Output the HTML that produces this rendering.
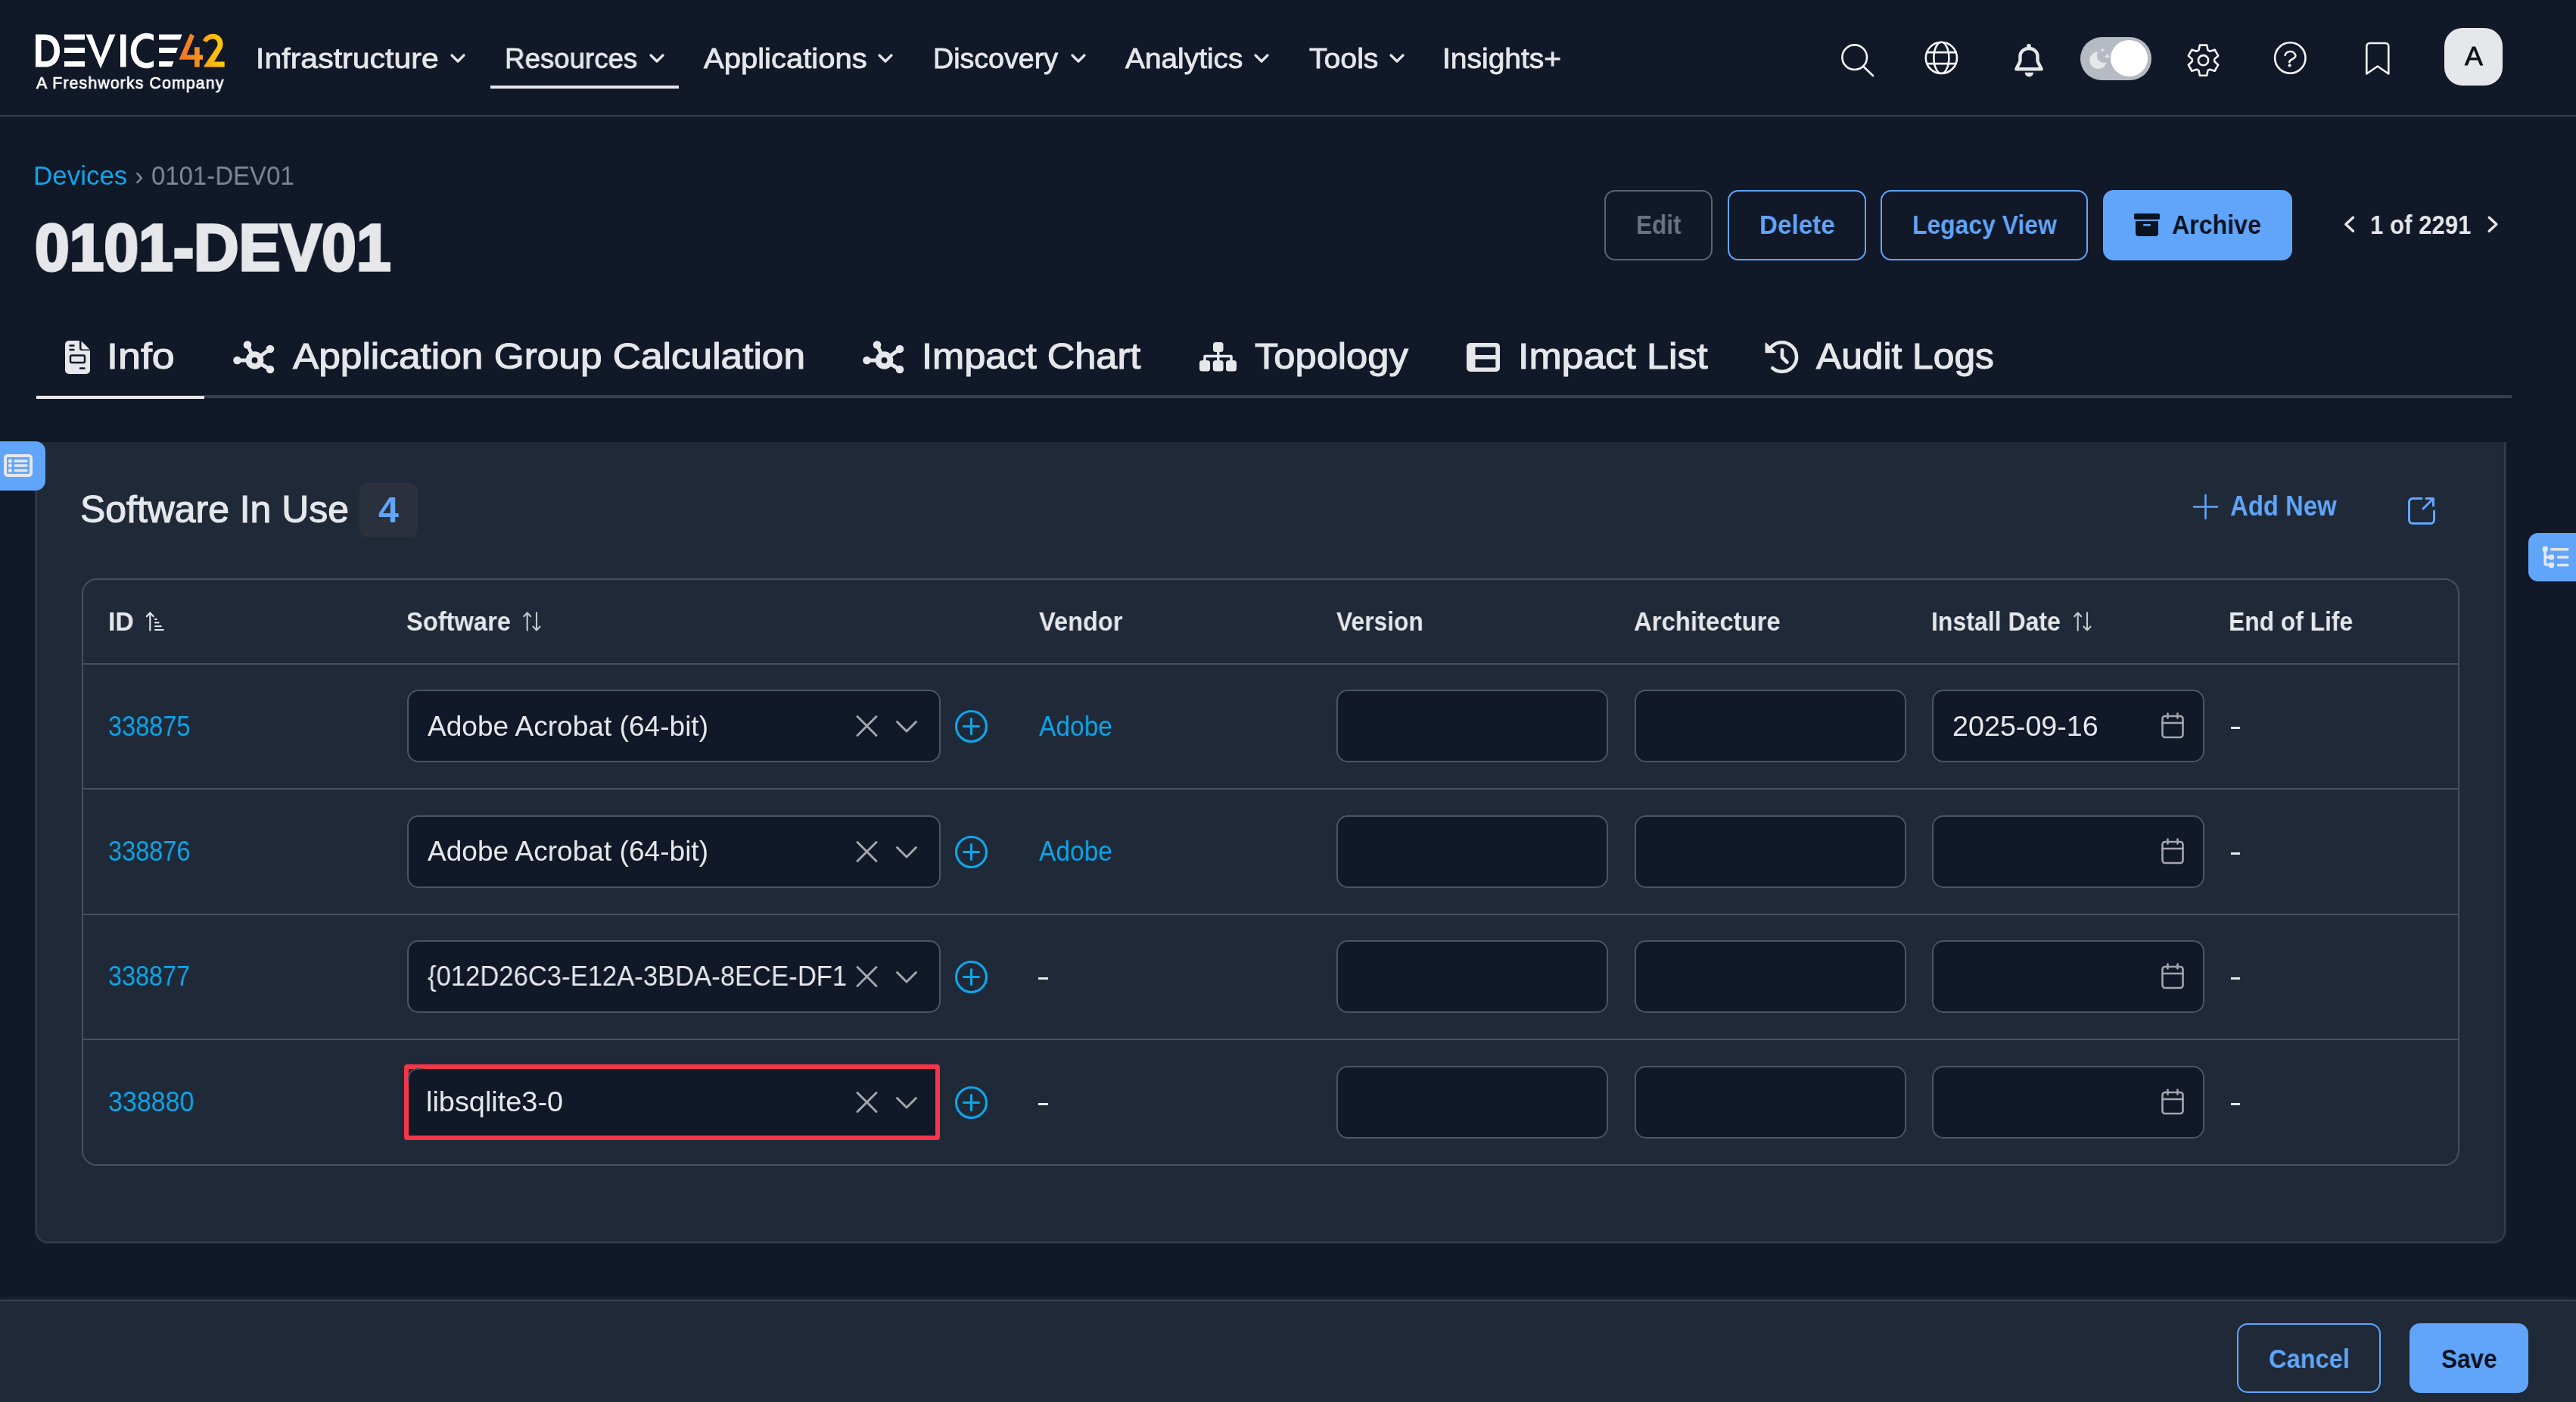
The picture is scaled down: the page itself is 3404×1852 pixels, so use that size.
<!DOCTYPE html>
<html><head><meta charset="utf-8">
<style>
*{box-sizing:border-box;margin:0;padding:0}
html,body{width:3404px;height:1852px;overflow:hidden;background:#111827;font-family:"Liberation Sans",sans-serif;color:#e5e7eb}
.a{position:absolute}
.t{position:absolute;white-space:nowrap;transform-origin:0 0;will-change:transform}
svg{overflow:visible}
.btn{position:absolute;top:251px;height:93px;border-radius:14px;border:2.6px solid #60a5fa}
.sel{left:537.5px;width:705px;height:96px;border:2px solid #4b5563;border-radius:15px;background:#111827}
.inp{height:96px;border:2px solid #4b5563;border-radius:15px;background:#111827}
</style></head>
<body>
<div class="a" style="left:0;top:152px;width:3404px;height:2px;background:#363c49"></div>
<svg class="a" style="left:46px;top:44px" width="252" height="80" viewBox="0 0 252 80">
<defs><linearGradient id="g42" gradientUnits="userSpaceOnUse" x1="190" y1="0" x2="251" y2="0"><stop offset="0" stop-color="#ee7328"/><stop offset="0.5" stop-color="#f7951d"/><stop offset="0.58" stop-color="#f5a81a"/><stop offset="1" stop-color="#ffd000"/></linearGradient></defs>
<path d="M1 1.5h13c12 0 19 9 19 21.5s-7 21.5-19 21.5h-13z M8.5 9v28h5.5c7 0 11.5-5.5 11.5-14s-4.5-14-11.5-14z" fill="#fff" fill-rule="evenodd"/>
<rect x="39" y="1.5" width="27" height="7" fill="#fff"/><rect x="39" y="19" width="27" height="7" fill="#fff"/><rect x="39" y="37" width="27" height="7" fill="#fff"/>
<path d="M67.5 1.5h8l11.5 31l11.5-31h8l-19.5 45z" fill="#fff"/>
<rect x="113" y="1.5" width="7.5" height="43" fill="#fff"/>
<path transform="translate(157.5 0) scale(0.93 1) translate(-157.5 0)" d="M157 10c-3-2-6.5-3-10-3c-8.5 0-14.5 7-14.5 16s6 16 14.5 16c3.5 0 7-1 10-3v8c-3 1.5-6.5 2.3-10 2.3c-13 0-22.5-10-22.5-23.3s9.5-23.3 22.5-23.3c3.5 0 7 .8 10 2.3z" fill="#fff"/>
<path d="M164 1.5h30.5l-2.5 7h-28z M164 19h25l-2.5 7h-22.5z M164 37h19.5l-2.5 7h-17z" fill="#fff"/>
<path d="M205.4 0.3L210.9 3.5L200.5 28.6H211.1V18.2H217.7V28.6H222V34.8H217.7V44.6H211.1V34.8H190.5Z" fill="url(#g42)"/>
<path d="M221.9 9.5C224.5 3.8 229.5 0.7 235.5 0.7C243 0.7 248.5 6.5 248.5 13.8C248.5 16 248.1 18 247.6 19.5L237 37.6H250.7V44.6H223.6V43.1L240.5 18C241.2 16.8 241.5 15.5 241.5 14.2C241.5 10 238.7 7.4 235.2 7.4C231.6 7.4 228.8 9.3 227.4 12.1Z" fill="url(#g42)"/>
</svg>
<div class="t" style="left:48.00px;top:99px;font-size:21.92px;line-height:21.92px;font-weight:normal;color:#fff;-webkit-text-stroke:0.7px #fff;transform:scaleX(0.9688);letter-spacing:1.2px;">A Freshworks Company</div>
<div class="t" style="left:338.32px;top:59px;font-size:37.58px;line-height:37.58px;font-weight:normal;color:#e5e7eb;-webkit-text-stroke:0.8px #e5e7eb;transform:scaleX(1.0922);">Infrastructure</div>
<svg class="a" style="left:595px;top:70px" width="20" height="14" viewBox="0 0 20 14"><path d="M2 3l8 8l8-8" fill="none" stroke="#e5e7eb" stroke-width="3.2" stroke-linecap="round" stroke-linejoin="round"/></svg>
<div class="t" style="left:667.35px;top:59px;font-size:37.58px;line-height:37.58px;font-weight:normal;color:#e5e7eb;-webkit-text-stroke:0.8px #e5e7eb;transform:scaleX(0.9757);">Resources</div>
<svg class="a" style="left:858px;top:70px" width="20" height="14" viewBox="0 0 20 14"><path d="M2 3l8 8l8-8" fill="none" stroke="#e5e7eb" stroke-width="3.2" stroke-linecap="round" stroke-linejoin="round"/></svg>
<div class="t" style="left:930.00px;top:59px;font-size:37.58px;line-height:37.58px;font-weight:normal;color:#e5e7eb;-webkit-text-stroke:0.8px #e5e7eb;transform:scaleX(1.0644);">Applications</div>
<svg class="a" style="left:1160px;top:70px" width="20" height="14" viewBox="0 0 20 14"><path d="M2 3l8 8l8-8" fill="none" stroke="#e5e7eb" stroke-width="3.2" stroke-linecap="round" stroke-linejoin="round"/></svg>
<div class="t" style="left:1232.80px;top:59px;font-size:37.58px;line-height:37.58px;font-weight:normal;color:#e5e7eb;-webkit-text-stroke:0.8px #e5e7eb;">Discovery</div>
<svg class="a" style="left:1415px;top:70px" width="20" height="14" viewBox="0 0 20 14"><path d="M2 3l8 8l8-8" fill="none" stroke="#e5e7eb" stroke-width="3.2" stroke-linecap="round" stroke-linejoin="round"/></svg>
<div class="t" style="left:1486.80px;top:59px;font-size:37.58px;line-height:37.58px;font-weight:normal;color:#e5e7eb;-webkit-text-stroke:0.8px #e5e7eb;transform:scaleX(1.0333);">Analytics</div>
<svg class="a" style="left:1657px;top:70px" width="20" height="14" viewBox="0 0 20 14"><path d="M2 3l8 8l8-8" fill="none" stroke="#e5e7eb" stroke-width="3.2" stroke-linecap="round" stroke-linejoin="round"/></svg>
<div class="t" style="left:1730.00px;top:59px;font-size:37.58px;line-height:37.58px;font-weight:normal;color:#e5e7eb;-webkit-text-stroke:0.8px #e5e7eb;transform:scaleX(1.0425);">Tools</div>
<svg class="a" style="left:1836px;top:70px" width="20" height="14" viewBox="0 0 20 14"><path d="M2 3l8 8l8-8" fill="none" stroke="#e5e7eb" stroke-width="3.2" stroke-linecap="round" stroke-linejoin="round"/></svg>
<div class="t" style="left:1906.39px;top:59px;font-size:37.58px;line-height:37.58px;font-weight:normal;color:#e5e7eb;-webkit-text-stroke:0.8px #e5e7eb;transform:scaleX(1.0374);">Insights+</div>
<div class="a" style="left:648px;top:113px;width:249px;height:4px;background:#e5e7eb"></div>
<svg class="a" style="left:2400px;top:40px" width="800" height="80" viewBox="2400 40 800 80"><g fill="none" stroke="#f3f4f6" stroke-width="2.6" stroke-linecap="round" stroke-linejoin="round"><circle cx="2450.7" cy="75.7" r="16.3"/><path d="M2462.5 88L2475 100"/><circle cx="2565.4" cy="76.4" r="20.6"/><ellipse cx="2565.4" cy="76.4" rx="10" ry="20.6"/><path d="M2546.1 69.1H2584.7M2546.3 84.1H2584.5"/><path d="M2905.48 66.18 L2906.87 59.63 L2916.13 59.63 L2917.52 66.18 L2920.20 67.73 L2926.57 65.65 L2931.20 73.68 L2926.22 78.15 L2926.22 81.25 L2931.20 85.72 L2926.57 93.75 L2920.20 91.67 L2917.52 93.22 L2916.13 99.77 L2906.87 99.77 L2905.48 93.22 L2902.80 91.67 L2896.43 93.75 L2891.80 85.72 L2896.78 81.25 L2896.78 78.15 L2891.80 73.68 L2896.43 65.65 L2902.80 67.73Z"/><circle cx="2911.5" cy="79.7" r="6.6"/><circle cx="3026.3" cy="76.5" r="20.2"/><path d="M3019.6 73A7 6.2 0 0 1 3033.4 73.5C3033.4 76 3031.5 77 3028.5 78.5C3026 79.7 3025.3 80.5 3025.3 82.2"/><path d="M3127.3 97.5V61A4 4 0 0 1 3131.3 57H3152.3A4 4 0 0 1 3156.3 61V97.5L3141.8 87.5Z"/></g><circle cx="3025.6" cy="86.5" r="2.1" fill="#f3f4f6"/></svg>
<svg class="a" style="left:2655px;top:52px" width="52" height="52" viewBox="0 0 52 52"><path d="M9.3 39.3H42.7L38 30C37.6 29 37.5 28 37.5 27V22A11.5 10 0 0 0 14.5 22V27C14.5 28 14.4 29 14 30Z" fill="none" stroke="#e5e7eb" stroke-width="4.4" stroke-linejoin="round"/><rect x="23.1" y="5.9" width="5.7" height="6" rx="2.5" fill="#e5e7eb"/><path d="M20.7 43.8H32.1A5.7 5.7 0 0 1 20.7 43.8Z" fill="#e5e7eb"/></svg>
<div class="a" style="left:2749px;top:49px;width:94px;height:57px;border-radius:29px;background:#b6bac2"></div>
<div class="a" style="left:2789px;top:53px;width:49px;height:48px;border-radius:50%;background:#ffffff"></div>
<svg class="a" style="left:2755px;top:60px" width="36" height="36" viewBox="0 0 36 36"><mask id="mm"><rect x="0" y="0" width="36" height="36" fill="white"/><circle cx="25" cy="13.8" r="9.2" fill="black"/></mask><circle cx="17.5" cy="19.8" r="11.3" fill="#e5e7eb" mask="url(#mm)"/><path d="M23.4 2.4999999999999996Q23.4 6.1 27.0 6.1Q23.4 6.1 23.4 9.7Q23.4 6.1 19.799999999999997 6.1Q23.4 6.1 23.4 2.4999999999999996Z M29.5 9.2Q29.5 14.2 34.5 14.2Q29.5 14.2 29.5 19.2Q29.5 14.2 24.5 14.2Q29.5 14.2 29.5 9.2Z" fill="#e5e7eb"/></svg>
<div class="a" style="left:3230px;top:37px;width:77px;height:76px;border-radius:24px;background:#e5e7eb"></div>
<div class="t" style="left:3256.50px;top:57px;font-size:35.85px;line-height:35.85px;font-weight:normal;color:#111;-webkit-text-stroke:0.8px #111;">A</div>
<div class="t" style="left:44.37px;top:215px;font-size:34.66px;line-height:34.66px;font-weight:normal;color:#0ea5e9;transform:scaleX(1.0084);">Devices</div>
<div class="t" style="left:178.00px;top:215px;font-size:34.66px;line-height:34.66px;font-weight:normal;color:#7c8a96;">›</div>
<div class="t" style="left:199.85px;top:215px;font-size:34.66px;line-height:34.66px;font-weight:normal;color:#7c8a96;transform:scaleX(0.9505);">0101-DEV01</div>
<div class="t" style="left:46.42px;top:284px;font-size:87.43px;line-height:87.43px;font-weight:bold;color:#e5e7eb;-webkit-text-stroke:3.5px #e5e7eb;transform:scaleX(0.9400);">0101-DEV01</div>
<div class="btn" style="left:2120px;width:143px;border-color:#5b6270"></div>
<div class="btn" style="left:2283px;width:183px"></div>
<div class="btn" style="left:2485px;width:274px"></div>
<div class="btn" style="left:2779px;width:250px;background:#60a5fa;border-color:#60a5fa"></div>
<div class="t" style="left:2161.87px;top:280px;font-size:34.39px;line-height:34.39px;font-weight:bold;color:#6b7280;transform:scaleX(0.9159);">Edit</div>
<div class="t" style="left:2324.57px;top:280px;font-size:34.39px;line-height:34.39px;font-weight:bold;color:#60a5fa;transform:scaleX(0.9670);">Delete</div>
<div class="t" style="left:2526.54px;top:280px;font-size:34.39px;line-height:34.39px;font-weight:bold;color:#60a5fa;transform:scaleX(0.9279);">Legacy View</div>
<div class="t" style="left:2870.06px;top:280px;font-size:34.39px;line-height:34.39px;font-weight:bold;color:#0b1220;transform:scaleX(0.9355);">Archive</div>
<svg class="a" style="left:2820px;top:282px" width="34" height="30" viewBox="0 0 34 30"><rect x="0" y="0" width="34" height="8" rx="2" fill="#0b1220"/><path d="M2 10h30v16a4 4 0 0 1-4 4h-22a4 4 0 0 1-4-4z" fill="#0b1220"/><rect x="12" y="14" width="10" height="2.5" rx="1.2" fill="#60a5fa"/></svg>
<svg class="a" style="left:3090px;top:280px" width="220" height="32" viewBox="3090 280 220 32"><g fill="none" stroke="#e5e7eb" stroke-width="3.4" stroke-linecap="round" stroke-linejoin="round"><path d="M3109.5 287.3L3099.8 296.3L3109.5 305.3M3289.2 287.3L3298.9 296.3L3289.2 305.3"/></g></svg>
<div class="t" style="left:3132.19px;top:280px;font-size:34.39px;line-height:34.39px;font-weight:bold;color:#e5e7eb;transform:scaleX(0.9069);">1 of 2291</div>
<div class="a" style="left:48px;top:522px;width:3271px;height:4px;background:#373e4b"></div>
<div class="a" style="left:48px;top:523px;width:222px;height:4px;background:#e5e7eb"></div>
<div class="t" style="left:141.27px;top:447px;font-size:47.56px;line-height:47.56px;font-weight:normal;color:#e5e7eb;-webkit-text-stroke:1.1px #e5e7eb;transform:scaleX(1.1324);">Info</div>
<div class="t" style="left:386.60px;top:447px;font-size:47.56px;line-height:47.56px;font-weight:normal;color:#e5e7eb;-webkit-text-stroke:1.1px #e5e7eb;transform:scaleX(1.0808);">Application Group Calculation</div>
<div class="t" style="left:1217.75px;top:447px;font-size:47.56px;line-height:47.56px;font-weight:normal;color:#e5e7eb;-webkit-text-stroke:1.1px #e5e7eb;transform:scaleX(1.0632);">Impact Chart</div>
<div class="t" style="left:1658.00px;top:447px;font-size:47.56px;line-height:47.56px;font-weight:normal;color:#e5e7eb;-webkit-text-stroke:1.1px #e5e7eb;transform:scaleX(1.0654);">Topology</div>
<div class="t" style="left:2005.64px;top:447px;font-size:47.56px;line-height:47.56px;font-weight:normal;color:#e5e7eb;-webkit-text-stroke:1.1px #e5e7eb;transform:scaleX(1.0907);">Impact List</div>
<div class="t" style="left:2399.80px;top:447px;font-size:47.56px;line-height:47.56px;font-weight:normal;color:#e5e7eb;-webkit-text-stroke:1.1px #e5e7eb;transform:scaleX(1.0455);">Audit Logs</div>
<svg class="a" style="left:86px;top:450px" width="33" height="44" viewBox="0 0 33 44"><path d="M0 5a5 5 0 0 1 5-5h14v10a3 3 0 0 0 3 3h11v26a5 5 0 0 1-5 5h-23a5 5 0 0 1-5-5z" fill="#e5e7eb"/><path d="M21.5 0.5l11 11h-9a2 2 0 0 1-2-2z" fill="#e5e7eb"/><g stroke="#111827" stroke-width="2.4" stroke-linecap="round" fill="none"><path d="M6.5 6.5h5M6.5 12h5M20 36.5h5.5"/><rect x="7" y="19.5" width="19" height="9.5" rx="2"/></g></svg>
<svg class="a" style="left:308px;top:450px" width="55" height="44" viewBox="0 0 55 44"><g fill="#e5e7eb"><circle cx="28.5" cy="26" r="11.8"/><circle cx="5.5" cy="26" r="5.3"/><circle cx="19" cy="5.5" r="5.3"/><circle cx="49" cy="11" r="5.3"/><circle cx="49" cy="38" r="5.3"/></g><g stroke="#e5e7eb" stroke-width="5"><path d="M5.5 26h20M19 5.5l9.5 20.5M49 11l-20.5 15M49 38l-20.5-12"/></g><circle cx="28.5" cy="26" r="3.9" fill="#111827"/></svg>
<svg class="a" style="left:1140px;top:450px" width="55" height="44" viewBox="0 0 55 44"><g fill="#e5e7eb"><circle cx="28.5" cy="26" r="11.8"/><circle cx="5.5" cy="26" r="5.3"/><circle cx="19" cy="5.5" r="5.3"/><circle cx="49" cy="11" r="5.3"/><circle cx="49" cy="38" r="5.3"/></g><g stroke="#e5e7eb" stroke-width="5"><path d="M5.5 26h20M19 5.5l9.5 20.5M49 11l-20.5 15M49 38l-20.5-12"/></g><circle cx="28.5" cy="26" r="3.9" fill="#111827"/></svg>
<svg class="a" style="left:1585px;top:452px" width="49" height="39" viewBox="0 0 49 39"><g fill="#e5e7eb"><rect x="18" y="0" width="13.5" height="13" rx="3.5"/><rect x="0" y="24" width="14" height="14.5" rx="3.5"/><rect x="17.8" y="24" width="13.8" height="14.5" rx="3.5"/><rect x="35" y="24" width="14" height="14.5" rx="3.5"/></g><g fill="none" stroke="#e5e7eb" stroke-width="3.5" stroke-linejoin="round"><path d="M24.8 12v14M7 26v-7.5h35v7.5"/></g></svg>
<svg class="a" style="left:1938px;top:453px" width="44" height="38" viewBox="0 0 44 38"><path fill-rule="evenodd" fill="#e5e7eb" d="M5 0h34a5 5 0 0 1 5 5v28a5 5 0 0 1-5 5h-34a5 5 0 0 1-5-5v-28a5 5 0 0 1 5-5z M11.5 5.5v10.5h26.8v-10.5z M11.5 21.5v11h26.8v-11z"/></svg>
<svg class="a" style="left:2333px;top:449px" width="44" height="45" viewBox="0 0 44 45"><g fill="none" stroke="#e5e7eb" stroke-width="4.6" stroke-linecap="round" stroke-linejoin="round"><path d="M9.2 37.2A19.3 19.3 0 1 0 7.5 9.5"/><path d="M22 13v10l6.5 6.5"/></g><path d="M0.3 4.2v12.4h12.6z" fill="#e5e7eb" stroke="#e5e7eb" stroke-width="1.5" stroke-linejoin="round"/></svg>
<div class="a" style="left:47px;top:584px;width:3264px;height:1058px;background:#1f2937;border:2px solid #373e4b;border-top:none;border-radius:0 0 16px 16px;box-shadow:0 0 4px rgba(160,170,190,0.18)"></div>
<div class="a" style="left:40px;top:576px;width:3280px;height:8px;background:#111827"></div>
<div class="a" style="left:0;top:583px;width:60px;height:65px;background:#60a5fa;border-radius:0 13px 13px 0"></div>
<svg class="a" style="left:5px;top:600px" width="38" height="30" viewBox="0 0 38 30"><rect x="2" y="2" width="34" height="26" rx="3" fill="none" stroke="#e5e7eb" stroke-width="4"/><g fill="#e5e7eb"><circle cx="8.4" cy="9" r="2.5"/><circle cx="8.4" cy="15" r="2.5"/><circle cx="8.4" cy="21.5" r="2.5"/></g><g stroke="#e5e7eb" stroke-width="3.5" stroke-linecap="round"><path d="M15 9h15M15 15h15M15 21.5h15"/></g></svg>
<div class="a" style="left:3341px;top:704px;width:63px;height:64px;background:#60a5fa;border-radius:13px 0 0 13px"></div>
<svg class="a" style="left:3359px;top:721px" width="36" height="30" viewBox="0 0 36 30"><g fill="#e5e7eb"><rect x="0.7" y="0.8" width="7" height="7" rx="2"/><rect x="9" y="11.5" width="7" height="7" rx="2"/><rect x="9" y="22" width="7" height="7" rx="2"/></g><g fill="none" stroke="#e5e7eb" stroke-width="3.5" stroke-linecap="round"><path d="M4.2 6v17a2 2 0 0 0 2 2h4M4.2 15h5M12.5 4.8h21.5M21.5 15h12.5M21.5 25.5h12.5"/></g></svg>
<div class="t" style="left:106.27px;top:649px;font-size:49.09px;line-height:49.09px;font-weight:normal;color:#e5e7eb;-webkit-text-stroke:1.1px #e5e7eb;transform:scaleX(1.0165);">Software In Use</div>
<div class="a" style="left:475px;top:638px;width:77px;height:72px;background:#2a303c;border-radius:10px"></div>
<div class="t" style="left:499.79px;top:650px;font-size:48.01px;line-height:48.01px;font-weight:bold;color:#60a5fa;transform:scaleX(1.0077);">4</div>
<svg class="a" style="left:2898px;top:653px" width="33" height="33" viewBox="0 0 33 33"><path d="M16.5 1v31M1 16.5h31" stroke="#60a5fa" stroke-width="2.6" stroke-linecap="round"/></svg>
<div class="t" style="left:2947.31px;top:651px;font-size:36.95px;line-height:36.95px;font-weight:bold;color:#60a5fa;transform:scaleX(0.8904);">Add New</div>
<svg class="a" style="left:3182px;top:657px" width="35" height="35" viewBox="0 0 35 35"><g fill="none" stroke="#60a5fa" stroke-width="3" stroke-linecap="round" stroke-linejoin="round"><path d="M18 1.5h-12a4.5 4.5 0 0 0-4.5 4.5v24a4.5 4.5 0 0 0 4.5 4.5h24a4.5 4.5 0 0 0 4.5-4.5v-12"/><path d="M20 15l13.5-13.5M24 1.5h9.5v9.5"/></g></svg>
<div class="a" style="left:108px;top:764px;width:3142px;height:776px;border:2px solid #474f5c;border-radius:20px"></div>
<div class="a" style="left:110px;top:876px;width:3138px;height:2px;background:#474f5c"></div>
<div class="a" style="left:110px;top:1041px;width:3138px;height:2px;background:#474f5c"></div>
<div class="a" style="left:110px;top:1207px;width:3138px;height:2px;background:#474f5c"></div>
<div class="a" style="left:110px;top:1372px;width:3138px;height:2px;background:#474f5c"></div>
<div class="t" style="left:143.33px;top:804px;font-size:34.39px;line-height:34.39px;font-weight:bold;color:#e5e7eb;transform:scaleX(0.9839);">ID</div>
<div class="t" style="left:536.55px;top:804px;font-size:34.39px;line-height:34.39px;font-weight:bold;color:#e5e7eb;transform:scaleX(0.9503);">Software</div>
<div class="t" style="left:1373.00px;top:804px;font-size:34.39px;line-height:34.39px;font-weight:bold;color:#e5e7eb;transform:scaleX(0.9466);">Vendor</div>
<div class="t" style="left:1766.30px;top:804px;font-size:34.39px;line-height:34.39px;font-weight:bold;color:#e5e7eb;transform:scaleX(0.9238);">Version</div>
<div class="t" style="left:2158.64px;top:804px;font-size:34.39px;line-height:34.39px;font-weight:bold;color:#e5e7eb;transform:scaleX(0.9570);">Architecture</div>
<div class="t" style="left:2552.14px;top:804px;font-size:34.39px;line-height:34.39px;font-weight:bold;color:#e5e7eb;transform:scaleX(0.9317);">Install Date</div>
<div class="t" style="left:2945.15px;top:804px;font-size:34.39px;line-height:34.39px;font-weight:bold;color:#e5e7eb;transform:scaleX(0.9240);">End of Life</div>
<svg class="a" style="left:190px;top:807px" width="30" height="28" viewBox="0 0 30 28"><g fill="none" stroke="#e5e7eb" stroke-width="2.1" stroke-linecap="round" stroke-linejoin="round"><path d="M8.3 2.6v23.2M3.8 7.3l4.5-4.7l4.5 4.7"/><path d="M15 11h1.8M15 15.5h4.6M15 20.2h7.8M15 25h10.8"/></g></svg>
<svg class="a" style="left:691px;top:807px" width="26" height="28" viewBox="0 0 26 28"><g fill="none" stroke="#c5c8ce" stroke-width="2.1" stroke-linecap="round" stroke-linejoin="round"><path d="M5.7 2.6v23.2M1.2 7.3l4.5-4.7l4.5 4.7"/><path d="M18 2.2v23.2M13.5 20.7l4.5 4.7l4.5-4.7"/></g></svg>
<svg class="a" style="left:2740px;top:807px" width="26" height="28" viewBox="0 0 26 28"><g fill="none" stroke="#c5c8ce" stroke-width="2.1" stroke-linecap="round" stroke-linejoin="round"><path d="M5.7 2.6v23.2M1.2 7.3l4.5-4.7l4.5 4.7"/><path d="M18 2.2v23.2M13.5 20.7l4.5 4.7l4.5-4.7"/></g></svg>
<div class="t" style="left:142.61px;top:942px;font-size:36.35px;line-height:36.35px;font-weight:normal;color:#0ea5e9;transform:scaleX(0.8950);">338875</div>
<div class="a sel" style="top:911.0px"></div>
<div class="t" style="left:564.70px;top:942px;font-size:36.35px;line-height:36.35px;font-weight:normal;color:#e5e7eb;transform:scaleX(1.0207);">Adobe Acrobat (64-bit)</div>
<svg class="a" style="left:1131px;top:945.0px" width="29" height="28" viewBox="0 0 29 28"><path d="M2 1.5l25 25M27 1.5l-25 25" stroke="#a3a6ad" stroke-width="3" stroke-linecap="round"/></svg>
<svg class="a" style="left:1183px;top:951.0px" width="31" height="18" viewBox="0 0 31 18"><path d="M2.5 2.5l12.5 12.5l12.5-12.5" fill="none" stroke="#a3a6ad" stroke-width="3" stroke-linecap="round" stroke-linejoin="round"/></svg>
<svg class="a" style="left:1261px;top:937.0px" width="45" height="45" viewBox="0 0 45 45"><g fill="none" stroke="#0ea5e9" stroke-width="3.2" stroke-linecap="round"><circle cx="22.5" cy="22.5" r="20"/><path d="M22.5 12.5v20M12.5 22.5h20"/></g></svg>
<div class="t" style="left:1373.00px;top:942px;font-size:36.35px;line-height:36.35px;font-weight:normal;color:#0ea5e9;transform:scaleX(0.9221);">Adobe</div>
<div class="a inp" style="left:1766px;top:911.0px;width:359px"></div>
<div class="a inp" style="left:2160px;top:911.0px;width:359px"></div>
<div class="a inp" style="left:2553px;top:911.0px;width:360px"></div>
<div class="t" style="left:2579.53px;top:942px;font-size:36.35px;line-height:36.35px;font-weight:normal;color:#e5e7eb;transform:scaleX(1.0374);">2025-09-16</div>
<svg class="a" style="left:2856px;top:941.0px" width="30" height="35" viewBox="0 0 30 35"><g fill="none" stroke="#a3a6ad" stroke-width="2.6" stroke-linecap="round" stroke-linejoin="round"><rect x="1.5" y="5" width="27" height="28" rx="3.5"/><path d="M8.5 1.5v6M21.5 1.5v6M1.5 14h27"/></g></svg>
<div class="a" style="left:2947.5px;top:960.0px;width:12.5px;height:3px;background:#e5e7eb"></div>
<div class="t" style="left:142.61px;top:1107px;font-size:36.35px;line-height:36.35px;font-weight:normal;color:#0ea5e9;transform:scaleX(0.8950);">338876</div>
<div class="a sel" style="top:1076.5px"></div>
<div class="t" style="left:564.70px;top:1107px;font-size:36.35px;line-height:36.35px;font-weight:normal;color:#e5e7eb;transform:scaleX(1.0207);">Adobe Acrobat (64-bit)</div>
<svg class="a" style="left:1131px;top:1110.5px" width="29" height="28" viewBox="0 0 29 28"><path d="M2 1.5l25 25M27 1.5l-25 25" stroke="#a3a6ad" stroke-width="3" stroke-linecap="round"/></svg>
<svg class="a" style="left:1183px;top:1116.5px" width="31" height="18" viewBox="0 0 31 18"><path d="M2.5 2.5l12.5 12.5l12.5-12.5" fill="none" stroke="#a3a6ad" stroke-width="3" stroke-linecap="round" stroke-linejoin="round"/></svg>
<svg class="a" style="left:1261px;top:1102.5px" width="45" height="45" viewBox="0 0 45 45"><g fill="none" stroke="#0ea5e9" stroke-width="3.2" stroke-linecap="round"><circle cx="22.5" cy="22.5" r="20"/><path d="M22.5 12.5v20M12.5 22.5h20"/></g></svg>
<div class="t" style="left:1373.00px;top:1107px;font-size:36.35px;line-height:36.35px;font-weight:normal;color:#0ea5e9;transform:scaleX(0.9221);">Adobe</div>
<div class="a inp" style="left:1766px;top:1076.5px;width:359px"></div>
<div class="a inp" style="left:2160px;top:1076.5px;width:359px"></div>
<div class="a inp" style="left:2553px;top:1076.5px;width:360px"></div>
<svg class="a" style="left:2856px;top:1106.5px" width="30" height="35" viewBox="0 0 30 35"><g fill="none" stroke="#a3a6ad" stroke-width="2.6" stroke-linecap="round" stroke-linejoin="round"><rect x="1.5" y="5" width="27" height="28" rx="3.5"/><path d="M8.5 1.5v6M21.5 1.5v6M1.5 14h27"/></g></svg>
<div class="a" style="left:2947.5px;top:1125.5px;width:12.5px;height:3px;background:#e5e7eb"></div>
<div class="t" style="left:142.61px;top:1272px;font-size:36.35px;line-height:36.35px;font-weight:normal;color:#0ea5e9;transform:scaleX(0.8908);">338877</div>
<div class="a sel" style="top:1242.0px"></div>
<div class="t" style="left:564.70px;top:1272px;font-size:36.35px;line-height:36.35px;font-weight:normal;color:#e5e7eb;transform:scaleX(0.9529);">{012D26C3-E12A-3BDA-8ECE-DF1</div>
<svg class="a" style="left:1131px;top:1276.0px" width="29" height="28" viewBox="0 0 29 28"><path d="M2 1.5l25 25M27 1.5l-25 25" stroke="#a3a6ad" stroke-width="3" stroke-linecap="round"/></svg>
<svg class="a" style="left:1183px;top:1282.0px" width="31" height="18" viewBox="0 0 31 18"><path d="M2.5 2.5l12.5 12.5l12.5-12.5" fill="none" stroke="#a3a6ad" stroke-width="3" stroke-linecap="round" stroke-linejoin="round"/></svg>
<svg class="a" style="left:1261px;top:1268.0px" width="45" height="45" viewBox="0 0 45 45"><g fill="none" stroke="#0ea5e9" stroke-width="3.2" stroke-linecap="round"><circle cx="22.5" cy="22.5" r="20"/><path d="M22.5 12.5v20M12.5 22.5h20"/></g></svg>
<div class="a" style="left:1372px;top:1291.0px;width:12.5px;height:3px;background:#e5e7eb"></div>
<div class="a inp" style="left:1766px;top:1242.0px;width:359px"></div>
<div class="a inp" style="left:2160px;top:1242.0px;width:359px"></div>
<div class="a inp" style="left:2553px;top:1242.0px;width:360px"></div>
<svg class="a" style="left:2856px;top:1272.0px" width="30" height="35" viewBox="0 0 30 35"><g fill="none" stroke="#a3a6ad" stroke-width="2.6" stroke-linecap="round" stroke-linejoin="round"><rect x="1.5" y="5" width="27" height="28" rx="3.5"/><path d="M8.5 1.5v6M21.5 1.5v6M1.5 14h27"/></g></svg>
<div class="a" style="left:2947.5px;top:1291.0px;width:12.5px;height:3px;background:#e5e7eb"></div>
<div class="t" style="left:142.56px;top:1438px;font-size:36.35px;line-height:36.35px;font-weight:normal;color:#0ea5e9;transform:scaleX(0.9361);">338880</div>
<div class="a" style="left:534px;top:1406.0px;width:708px;height:99.5px;border:6px solid #f5364a;border-radius:4px;background:#111827"></div>
<div class="a" style="left:539px;top:1411.0px;width:18px;height:18px;border-top:2px solid #474f5c;border-left:2px solid #474f5c;border-radius:13px 0 0 0"></div>
<div class="t" style="left:562.61px;top:1438px;font-size:36.35px;line-height:36.35px;font-weight:normal;color:#e5e7eb;transform:scaleX(1.0427);">libsqlite3-0</div>
<svg class="a" style="left:1131px;top:1441.5px" width="29" height="28" viewBox="0 0 29 28"><path d="M2 1.5l25 25M27 1.5l-25 25" stroke="#a3a6ad" stroke-width="3" stroke-linecap="round"/></svg>
<svg class="a" style="left:1183px;top:1447.5px" width="31" height="18" viewBox="0 0 31 18"><path d="M2.5 2.5l12.5 12.5l12.5-12.5" fill="none" stroke="#a3a6ad" stroke-width="3" stroke-linecap="round" stroke-linejoin="round"/></svg>
<svg class="a" style="left:1261px;top:1433.5px" width="45" height="45" viewBox="0 0 45 45"><g fill="none" stroke="#0ea5e9" stroke-width="3.2" stroke-linecap="round"><circle cx="22.5" cy="22.5" r="20"/><path d="M22.5 12.5v20M12.5 22.5h20"/></g></svg>
<div class="a" style="left:1372px;top:1456.5px;width:12.5px;height:3px;background:#e5e7eb"></div>
<div class="a inp" style="left:1766px;top:1407.5px;width:359px"></div>
<div class="a inp" style="left:2160px;top:1407.5px;width:359px"></div>
<div class="a inp" style="left:2553px;top:1407.5px;width:360px"></div>
<svg class="a" style="left:2856px;top:1437.5px" width="30" height="35" viewBox="0 0 30 35"><g fill="none" stroke="#a3a6ad" stroke-width="2.6" stroke-linecap="round" stroke-linejoin="round"><rect x="1.5" y="5" width="27" height="28" rx="3.5"/><path d="M8.5 1.5v6M21.5 1.5v6M1.5 14h27"/></g></svg>
<div class="a" style="left:2947.5px;top:1456.5px;width:12.5px;height:3px;background:#e5e7eb"></div>
<div class="a" style="left:0;top:1717px;width:3404px;height:135px;background:#1f2937;border-top:2.5px solid #3a404c;box-shadow:0 -2px 6px rgba(160,170,190,0.12)"></div>
<div class="btn" style="left:2956px;top:1748px;width:190px;height:92px"></div>
<div class="btn" style="left:3184px;top:1748px;width:157px;height:92px;background:#60a5fa;border-color:#60a5fa"></div>
<div class="t" style="left:2997.87px;top:1777px;font-size:35.22px;line-height:35.22px;font-weight:bold;color:#60a5fa;transform:scaleX(0.9259);">Cancel</div>
<div class="t" style="left:3225.81px;top:1777px;font-size:35.22px;line-height:35.22px;font-weight:bold;color:#0b1220;transform:scaleX(0.8938);">Save</div>
</body></html>
